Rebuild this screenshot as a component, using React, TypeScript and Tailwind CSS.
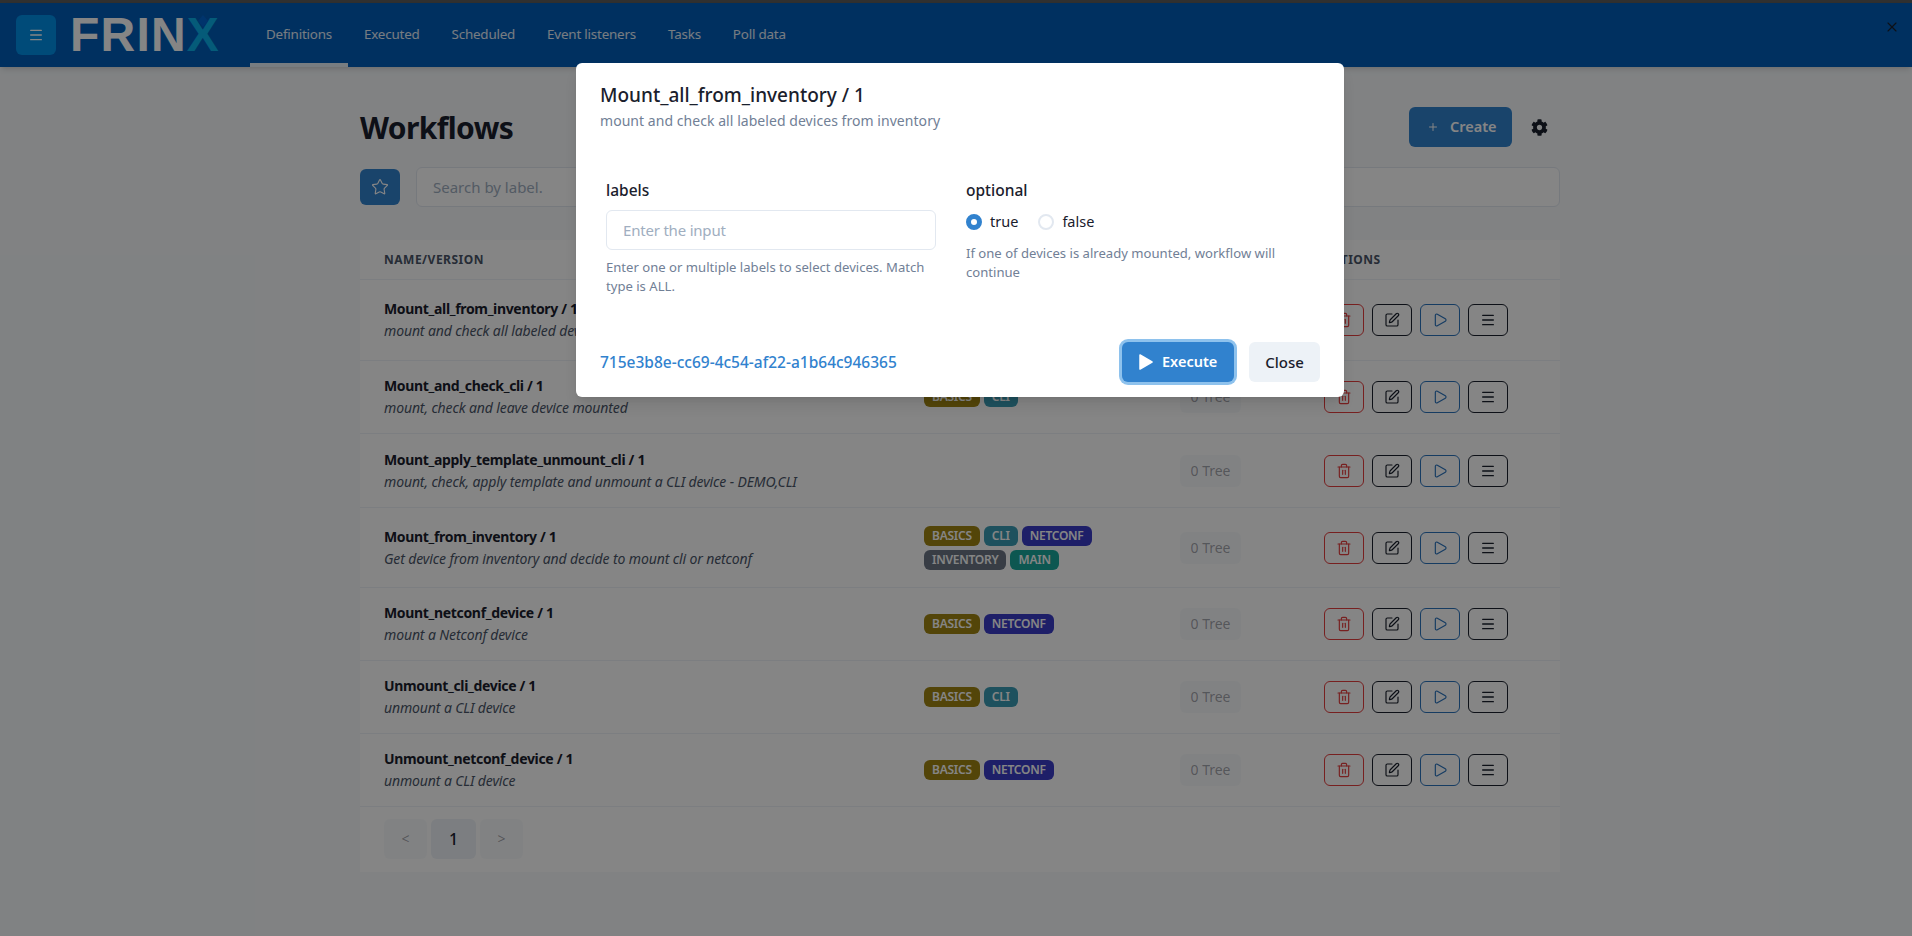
import React from "react";
import { Menu, Star, Plus, Trash2, SquarePen, Play, X } from "lucide-react";
import { FaCog } from "react-icons/fa";

type Tag = "BASICS" | "CLI" | "NETCONF" | "INVENTORY" | "MAIN";

const tagClass: Record<Tag, string> = {
  BASICS: "bg-[#a08412]",
  CLI: "bg-[#3b9cb5]",
  NETCONF: "bg-[#3a3cc8]",
  INVENTORY: "bg-[#6b7585]",
  MAIN: "bg-[#1aa89c]",
};

const rows: { name: string; desc: string; tags: Tag[]; h: string }[] = [
  { name: "Mount_all_from_inventory / 1", desc: "mount and check all labeled devices from inventory", tags: ["BASICS", "CLI", "NETCONF", "INVENTORY", "MAIN"], h: "h-[81px]" },
  { name: "Mount_and_check_cli / 1", desc: "mount, check and leave device mounted", tags: ["BASICS", "CLI"], h: "h-[73px]" },
  { name: "Mount_apply_template_unmount_cli / 1", desc: "mount, check, apply template and unmount a CLI device - DEMO,CLI", tags: [], h: "h-[74px]" },
  { name: "Mount_from_inventory / 1", desc: "Get device from inventory and decide to mount cli or netconf", tags: ["BASICS", "CLI", "NETCONF", "INVENTORY", "MAIN"], h: "h-[80px]" },
  { name: "Mount_netconf_device / 1", desc: "mount a Netconf device", tags: ["BASICS", "NETCONF"], h: "h-[73px]" },
  { name: "Unmount_cli_device / 1", desc: "unmount a CLI device", tags: ["BASICS", "CLI"], h: "h-[73px]" },
  { name: "Unmount_netconf_device / 1", desc: "unmount a CLI device", tags: ["BASICS", "NETCONF"], h: "h-[73px]" },
];

const tabs = ["Definitions", "Executed", "Scheduled", "Event listeners", "Tasks", "Poll data"];

function ActionBtn({ cls, children }: { cls: string; children: React.ReactNode }) {
  return <button className={`flex h-8 w-10 items-center justify-center rounded-md border bg-transparent ${cls}`}>{children}</button>;
}

function Row({ name, desc, tags, h }: (typeof rows)[number]) {
  return (
    <div className={`flex items-center border-b border-[#edf2f7] ${h}`}>
      <div className="w-[540px] pl-6">
        <div className="text-sm leading-[22px] font-bold tracking-[-0.33px] text-[#1a202c]">{name}</div>
        <div className="text-sm leading-[22px] tracking-[-0.12px] text-[#4a5568] italic">{desc}</div>
      </div>
      <div className="flex w-[280px] flex-wrap gap-1 pr-10 pl-6">
        {tags.map((t) => (
          <span key={t} className={`h-5 rounded-md px-2 text-xs leading-5 font-semibold tracking-[-0.25px] text-white ${tagClass[t]}`}>{t}</span>
        ))}
      </div>
      <div className="w-[144px]">
        <button className="h-8 w-[61px] rounded-md bg-[#edf2f7]/40 text-sm text-[#1a202c]/40">0 Tree</button>
      </div>
      <div className="flex gap-2">
        <ActionBtn cls="border-[#e53e3e] text-[#e53e3e]"><Trash2 size={16} strokeWidth={1.75} /></ActionBtn>
        <ActionBtn cls="border-[#1a202c] text-[#1a202c]"><SquarePen size={16} strokeWidth={1.75} /></ActionBtn>
        <ActionBtn cls="border-[#2b74bd] text-[#2b74bd]"><Play size={16} strokeWidth={1.75} /></ActionBtn>
        <ActionBtn cls="border-[#1a202c] text-[#1a202c]"><Menu size={16} strokeWidth={2} /></ActionBtn>
      </div>
    </div>
  );
}

export default function App() {
  return (
    <div className="relative h-[936px] overflow-hidden bg-[#f7fafc] font-['Noto_Sans',sans-serif] text-[#1a202c]">
      <div className="h-[3px] bg-[#5c5c5c]" />
      <header className="flex h-16 items-center bg-[#005cb9] pl-4 shadow-md">
        <button className="flex h-10 w-10 items-center justify-center rounded-md bg-[#0090e8] text-white">
          <Menu size={16} strokeWidth={2} />
        </button>
        <div className="ml-[14px] w-[180px] font-['Liberation_Sans',sans-serif] text-[48px] leading-none font-bold tracking-[1.2px] text-white">
          FRIN
          <span className="relative text-[#0aaee8]">
            X
            <svg className="absolute top-[7px] left-[10px] h-3 w-3" viewBox="0 0 12 12"><polygon points="6,0 11,6 6,12 1,6" fill="#0064d0" /></svg>
          </span>
        </div>
        <nav className="flex h-full items-end">
          {tabs.map((t, i) => (
            <div key={t} className={`flex h-full items-center border-b-4 px-4 pt-[2px] text-[13.4px] tracking-[-0.2px] text-white/90 ${i === 0 ? "border-white/90" : "border-transparent"}`}>{t}</div>
          ))}
        </nav>
        <X size={16} strokeWidth={1.75} className="absolute top-[19px] right-3 text-[#1a202c]" />
      </header>

      <main className="ml-[360px] w-[1200px] pt-10">
        <div className="flex h-10 items-center">
          <h1 className="flex-1 pt-[2px] text-3xl font-bold tracking-[-0.6px]">Workflows</h1>
          <button className="flex h-10 w-[103px] items-center gap-[11px] rounded-md bg-[#3182ce] pl-[18px] font-semibold text-white">
            <Plus size={12} strokeWidth={2} /> <span className="text-[14.5px]">Create</span>
          </button>
          <div className="flex w-12 justify-end pr-[12px]"><FaCog size={17} /></div>
        </div>

        <div className="mt-5 flex items-center gap-4">
          <button className="flex h-9 w-10 items-center justify-center rounded-md bg-[#3182ce] text-white"><Star size={18} strokeWidth={1.5} /></button>
          <div className="flex h-10 flex-1 items-center rounded-md border border-[#e2e8f0] bg-white pl-4 text-[#a0aec0]">
            <span className="text-[15px]">Search by label.</span>
          </div>
        </div>

        <section className="mt-[33px] bg-white">
          <div className="flex h-10 items-center border-b border-[#edf2f7] text-xs font-bold tracking-[0.5px] text-[#4a5568]">
            <div className="w-[964px] pl-6">NAME/VERSION</div>
            <div>ACTIONS</div>
          </div>
          {rows.map((r) => <Row key={r.name} {...r} />)}
          <div className="flex h-[65px] items-start gap-1 pt-[12px] pl-6 text-[#1a202c]">
            <button className="h-10 w-[43px] rounded-md bg-[#edf2f7]/40 text-sm text-[#1a202c]/40">&lt;</button>
            <button className="h-10 w-[45px] rounded-md bg-[#edf2f7] font-medium">1</button>
            <button className="h-10 w-[43px] rounded-md bg-[#edf2f7]/40 text-sm text-[#1a202c]/40">&gt;</button>
          </div>
        </section>
      </main>

      <div className="absolute inset-0 bg-black/48" />

      <div className="absolute inset-0 flex justify-center pt-[63px] pl-2">
        <div className="h-[334px] w-[768px] rounded-md bg-white shadow-lg">
          <div className="px-6 pt-[18px]">
            <div className="text-[19px] leading-7 font-medium">Mount_all_from_inventory / 1</div>
            <div className="text-sm leading-6 tracking-[0.05px] text-[#718096]">mount and check all labeled devices from inventory</div>
          </div>
          <div className="flex gap-[30px] pt-[45px] pl-[30px]">
            <div className="w-[330px]">
              <div className="text-[15.5px] leading-6 font-medium">labels</div>
              <div className="mt-2 flex h-10 items-center rounded-md border border-[#e2e8f0] pl-4 text-[15px] tracking-[-0.2px] text-[#a0aec0]">Enter the input</div>
              <p className="mt-2 text-[13.1px] leading-[19px] text-[#718096]">Enter one or multiple labels to select devices. Match type is ALL.</p>
            </div>
            <div className="w-[330px]">
              <div className="text-[15.5px] leading-6 font-medium">optional</div>
              <div className="mt-[8px] flex h-6 items-center text-[14.5px]">
                <span className="h-4 w-4 rounded-full border-[5px] border-[#3182ce] bg-white" />
                <span className="ml-2">true</span>
                <span className="ml-5 h-4 w-4 rounded-full border-2 border-[#e2e8f0] bg-white" />
                <span className="ml-2">false</span>
              </div>
              <p className="mt-[10px] w-[320px] text-[13.1px] leading-[19px] text-[#718096]">If one of devices is already mounted, workflow will continue</p>
            </div>
          </div>
          <div className="flex items-center px-6 pt-[46px]">
            <div className="flex-1 pt-[2px] text-[15.5px] font-medium text-[#3182ce]">715e3b8e-cc69-4c54-af22-a1b64c946365</div>
            <button className="flex h-10 w-[112px] items-center gap-[9px] rounded-md bg-[#3182ce] pl-[17px] text-[14.5px] font-semibold text-white shadow-[0_0_0_3px_rgba(66,153,225,0.6)]">
              <svg width="14" height="16" viewBox="0 0 14 16"><polygon points="1,1 13,8 1,15" fill="currentColor" stroke="currentColor" strokeWidth="1.5" strokeLinejoin="round" /></svg>
              Execute
            </button>
            <button className="ml-[15px] h-10 w-[71px] rounded-md bg-[#edf2f7] text-[15px] font-medium">Close</button>
          </div>
        </div>
      </div>
    </div>
  );
}
